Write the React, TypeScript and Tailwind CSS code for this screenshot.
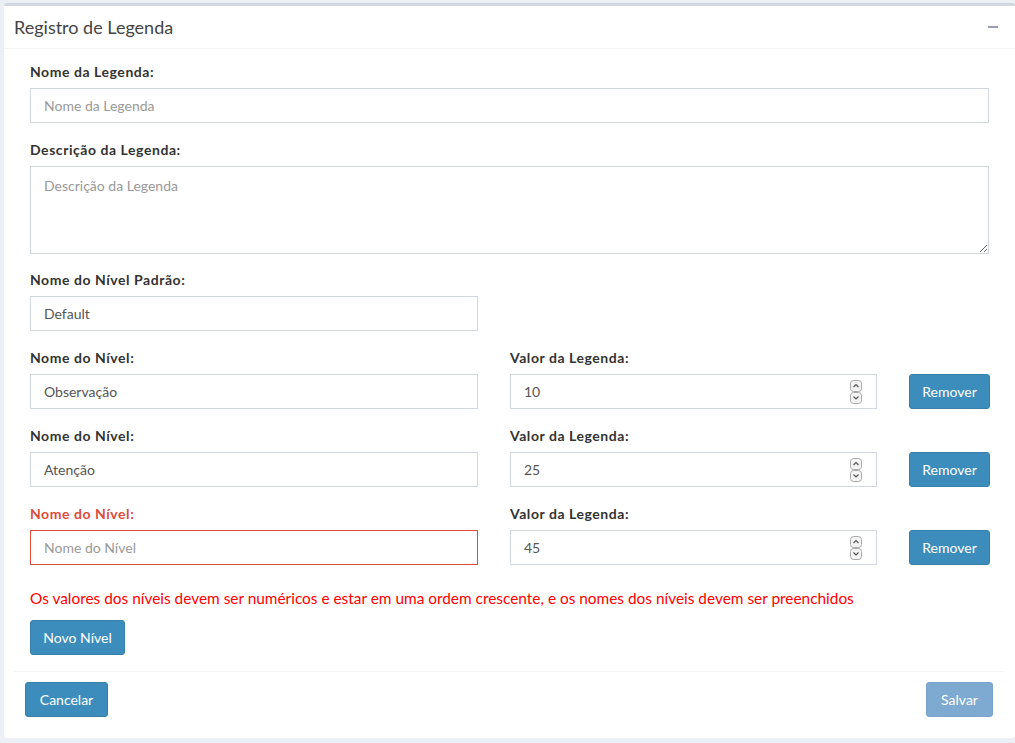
import React from 'react';

const font = { fontFamily: 'Lato, "Noto Sans", sans-serif' };

function Spinner() {
  return (
    <svg width="12" height="24" viewBox="0 0 12 24" className="shrink-0">
      <rect x="0.5" y="0.5" width="11" height="11" rx="3" fill="#f4f4f4" stroke="#a9a9a9" />
      <path d="M3.5 7 L6 4.5 L8.5 7" fill="none" stroke="#555" strokeWidth="1.2" />
      <rect x="0.5" y="12.5" width="11" height="11" rx="3" fill="#f4f4f4" stroke="#a9a9a9" />
      <path d="M3.5 16.5 L6 19 L8.5 16.5" fill="none" stroke="#555" strokeWidth="1.2" />
    </svg>
  );
}

function Label({ children, error }: { children: React.ReactNode; error?: boolean }) {
  return (
    <div className={`h-5 leading-5 mb-[6px] text-[14px] font-bold tracking-[0.55px] ${error ? 'text-[#dd4b39]' : 'text-[#333]'}`}>
      {children}
    </div>
  );
}

function TextInput({ value, placeholder, error, width }: { value?: string; placeholder?: string; error?: boolean; width: string }) {
  return (
    <div
      className={`${width} h-[35px] border ${error ? 'border-[#dd4b39]' : 'border-[#d2d6de]'} bg-white px-[13px] flex items-center text-[14px] ${value ? 'text-[#555]' : 'text-[#999]'}`}
    >
      {value || placeholder}
    </div>
  );
}

function NivelRow({ nome, valor, error }: { nome: string; valor: string; error?: boolean }) {
  return (
    <div className="flex items-end mb-[17px]">
      <div className="w-[448px] shrink-0">
        <Label error={error}>Nome do Nível:</Label>
        <TextInput value={error ? '' : nome} placeholder="Nome do Nível" error={error} width="w-[448px]" />
      </div>
      <div className="w-[367px] ml-[32px] shrink-0">
        <Label>Valor da Legenda:</Label>
        <div className="h-[35px] border border-[#d2d6de] bg-white pl-[13px] pr-[14px] flex items-center justify-between text-[14px] text-[#555]">
          <span>{valor}</span>
          <Spinner />
        </div>
      </div>
      <button className="ml-[32px] shrink-0 w-[81px] h-[35px] rounded-[3px] bg-[#3c8dbc] border border-[#367fa9] text-white text-[14px]">
        Remover
      </button>
    </div>
  );
}

export default function App() {
  return (
    <div className="min-h-screen bg-[#ecf0f5] pt-[3px] pl-[4px]" style={font}>
      <div className="bg-white border-t-[3px] border-[#d2d6de] rounded-[3px]">
        {/* header */}
        <div className="h-[43px] flex items-center justify-between px-[10px] border-b border-[#f4f4f4]">
          <h3 className="text-[18px] text-[#444] leading-none">Registro de Legenda</h3>
          <div className="w-[10px] h-[2px] bg-[#97a0b3] mr-[7px]" />
        </div>

        {/* body */}
        <div className="px-[26px] pt-[13px]">
          <div className="mb-[17px]">
            <Label>Nome da Legenda:</Label>
            <TextInput placeholder="Nome da Legenda" width="w-full" />
          </div>

          <div className="mb-[16px]">
            <Label>Descrição da Legenda:</Label>
            <textarea
              placeholder="Descrição da Legenda"
              className="block w-full h-[88px] border border-[#d2d6de] px-[13px] py-[8px] text-[14px] text-[#555] placeholder:text-[#999] outline-none"
              style={font}
            />
          </div>

          <div className="mb-[17px]">
            <Label>Nome do Nível Padrão:</Label>
            <TextInput value="Default" width="w-[448px]" />
          </div>

          <NivelRow nome="Observação" valor="10" />
          <NivelRow nome="Atenção" valor="25" />
          <NivelRow nome="" valor="45" error />

          <div className="text-[15.4px] leading-[22px] text-[#ff0000] mt-[22px]">
            Os valores dos níveis devem ser numéricos e estar em uma ordem crescente, e os nomes dos níveis devem ser preenchidos
          </div>

          <button className="mt-[11px] mb-[16px] w-[95px] h-[35px] rounded-[3px] bg-[#3c8dbc] border border-[#367fa9] text-white text-[14px]">
            Novo Nível
          </button>
        </div>

        {/* footer */}
        <div className="mx-[10px] border-t border-[#f4f4f4] px-[11px] pt-[10px] pb-[21px] flex justify-between">
          <button className="w-[83px] h-[35px] rounded-[3px] bg-[#3c8dbc] border border-[#367fa9] text-white text-[14px]">
            Cancelar
          </button>
          <button className="mr-[1px] w-[67px] h-[35px] rounded-[3px] bg-[#7ea9d0] border border-[#7aa3cb] text-white text-[14px]">
            Salvar
          </button>
        </div>
      </div>
    </div>
  );
}
